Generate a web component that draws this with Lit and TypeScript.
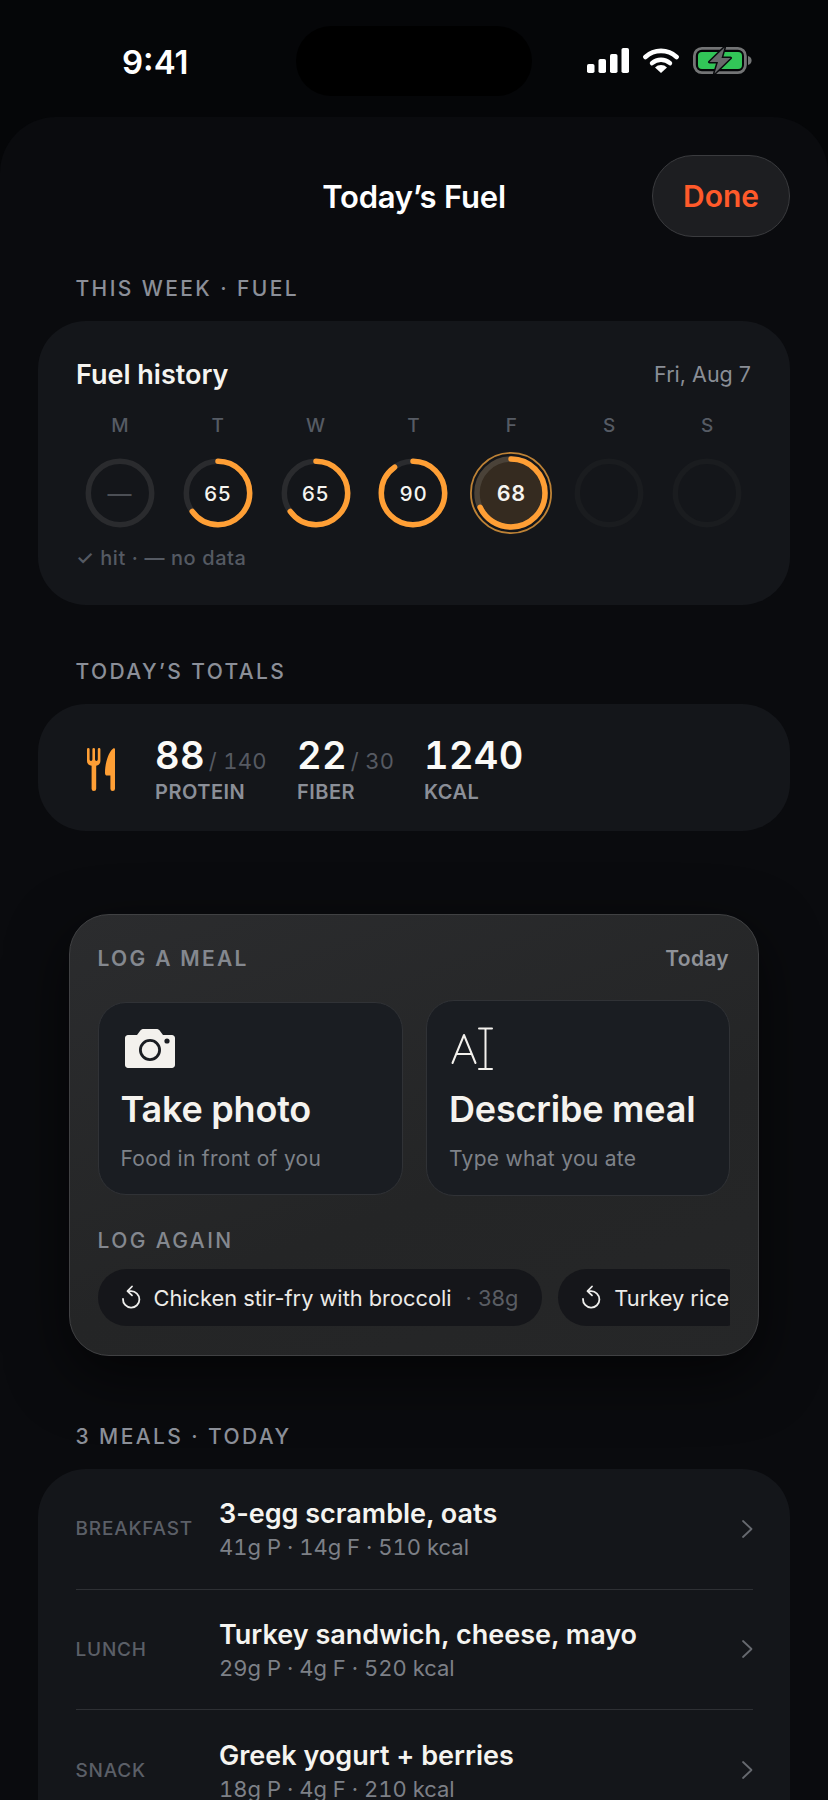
import { LitElement, html, css, svg } from "lit";
import { customElement } from "lit/decorators.js";

const RING_R = 31.7;
const CIRC = 2 * Math.PI * RING_R;

const DAYS: { l: string; v?: number; kind: "empty" | "score" | "future" | "today" }[] = [
  { l: "M", kind: "empty" },
  { l: "T", v: 65, kind: "score" },
  { l: "W", v: 65, kind: "score" },
  { l: "T", v: 90, kind: "score" },
  { l: "F", v: 68, kind: "today" },
  { l: "S", kind: "future" },
  { l: "S", kind: "future" },
];

const MEALS = [
  { tag: "BREAKFAST", name: "3-egg scramble, oats", sub: "41g P · 14g F · 510 kcal" },
  { tag: "LUNCH", name: "Turkey sandwich, cheese, mayo", sub: "29g P · 4g F · 520 kcal" },
  { tag: "SNACK", name: "Greek yogurt + berries", sub: "18g P · 4g F · 210 kcal" },
];

const replayIcon = html`<svg class="replay" viewBox="0 0 20 25" width="20" height="25" fill="none" stroke="#eeeeec" stroke-width="1.8" stroke-linecap="round" stroke-linejoin="round">
  <path d="M7 6.2 H10 A8.2 8.2 0 1 1 2 14" /><path d="M11 1.5 L6.5 6.2 L11 10.4" />
</svg>`;

@customElement("app-root")
export class AppRoot extends LitElement {
  static styles = css`
    :host { display: block; width: 828px; height: 1800px; overflow: hidden; background: #050608; font-family: Inter, "Liberation Sans", sans-serif; color: #f5f4f0; }
    .status { height: 117px; box-sizing: border-box; padding: 26px 76px 0 122px; display: flex; align-items: flex-start; justify-content: space-between; position: relative; }
    .time { font-size: 33px; line-height: 40px; font-weight: 600; margin-top: 16px; color: #fff; }
    .island { position: absolute; left: 296px; top: 26px; width: 236px; height: 70px; border-radius: 36px; background: #000; }
    .sys { display: flex; align-items: center; gap: 14px; margin-top: 20px; height: 28px; }
    .sys svg { display: block; }
    .sheet { background: #0a0b0e; border-radius: 56px 56px 0 0; height: 1683px; box-sizing: border-box; padding: 38px 38px 0 38px; }
    .nav { height: 82px; display: flex; align-items: center; justify-content: center; position: relative; }
    .nav h1 { margin: 0; font-size: 31px; font-weight: 600; color: #fff; letter-spacing: -0.2px; }
    .done { position: absolute; right: 0; top: 0; width: 138px; height: 82px; box-sizing: border-box; border-radius: 41px; background: #1d1e21; border: 1.5px solid #3a3b3e; color: #ff5a2a; font-size: 30px; font-weight: 600; display: flex; align-items: center; justify-content: center; }
    .label { font-size: 21px; line-height: 26px; font-weight: 500; letter-spacing: 2.4px; color: #8b8f98; margin-left: 37.5px; }
    .l1 { margin-top: 39px; }
    .card { background: #14161a; border-radius: 48px; width: 752px; box-sizing: border-box; }
    .week { margin-top: 19px; height: 284px; padding: 36px 34px 0 33px; }
    .wk-head { display: flex; justify-content: space-between; align-items: center; height: 34px; padding: 0 5px 0 5px; }
    .wk-title { font-size: 27px; font-weight: 600; color: #f5f4f0; }
    .wk-date { font-size: 21.5px; color: #8a8e96; }
    .days { display: grid; grid-template-columns: repeat(7, 1fr); margin-top: 23px; }
    .day { display: flex; flex-direction: column; align-items: center; }
    .day-l { font-size: 19px; line-height: 24px; font-weight: 500; color: #565b64; }
    .ring { position: relative; width: 82px; height: 82px; margin-top: 14px; }
    .ring svg { display: block; }
    .ring-n { position: absolute; inset: 0; display: flex; align-items: center; justify-content: center; font-size: 20.5px; font-weight: 500; color: #f5f4f0; letter-spacing: 0.6px; font-variant-numeric: tabular-nums; }
    .today .ring-n { font-weight: 600; font-size: 21.5px; }
    .dash { color: #4c4f55; font-size: 24px; font-weight: 400; }
    .legend { margin: 12px 0 0 5px; font-size: 20px; line-height: 24px; font-weight: 500; color: #555a63; letter-spacing: 0.6px; }
    .l2 { margin-top: 54px; }
    .totals { margin-top: 19px; height: 127px; display: flex; align-items: flex-start; padding: 28px 0 0 49px; }
    .fork { margin-top: 16px; width: 28px; flex: none; }
    .metrics { display: flex; margin-left: 40px; }
    .m { display: flex; flex-direction: column; }
    .m1 { width: 142px; }
    .m2 { width: 127px; }
    .big { font-size: 38px; line-height: 46px; font-weight: 600; color: #fbfaf7; letter-spacing: 0.3px; white-space: nowrap; font-variant-numeric: tabular-nums; }
    .of { font-size: 22px; line-height: 1; font-weight: 400; color: #565a62; letter-spacing: 0.3px; margin-left: 4px; }
    .cap { font-size: 20px; line-height: 24px; font-weight: 600; color: #8b8f98; letter-spacing: 0.5px; margin-top: 2px; }
    .log { margin: 83px 0 0 31px; width: 690px; height: 442px; box-sizing: border-box; border-radius: 40px; background: linear-gradient(160deg, #2b2c2e 0%, #242526 60%, #262728 100%); border: 1.5px solid #404143; box-shadow: 0 20px 60px rgba(0,0,0,.6); padding: 29px 28px 0 27.5px; }
    .log-head { display: flex; justify-content: space-between; align-items: center; height: 28px; }
    .log-t { font-size: 21px; font-weight: 600; letter-spacing: 2.3px; color: #84888f; }
    .log-d { font-size: 21px; font-weight: 600; color: #8f9298; letter-spacing: .3px; margin-right: 1px; }
    .acts { display: flex; justify-content: space-between; margin-top: 28px; align-items: center; }
    .act { box-sizing: border-box; background: #1a1d22; border: 1.5px solid #303236; border-radius: 28px; display: flex; flex-direction: column; }
    .a1 { width: 305px; height: 193px; padding: 25px 0 0 22px; }
    .a2 { width: 304px; height: 196px; padding: 26px 0 0 22px; }
    .act-i { height: 44px; display: block; margin-left: 4px; }
    .a2 .act-i { margin-left: 2px; }
    .act-t { font-size: 36px; line-height: 44px; font-weight: 600; color: #f5f3ef; margin-top: 15px; white-space: nowrap; letter-spacing: -0.2px; }
    .a2 .act-t { margin-top: 16px; }
    .act-s { font-size: 21px; line-height: 28px; color: #7e8289; margin-top: 14px; letter-spacing: 0.3px; }
    .again { font-size: 21px; line-height: 26px; font-weight: 500; letter-spacing: 2.4px; color: #84888f; margin-top: 32px; }
    .chips { display: flex; gap: 16px; overflow: hidden; margin-top: 15px; width: 632px; }
    .chip { flex: none; height: 57px; border-radius: 28.5px; background: #15161a; display: flex; align-items: center; padding: 0 24px 0 23px; font-size: 21.8px; color: #ecebe8; white-space: nowrap; box-sizing: border-box; }
    .replay { margin-right: 13px; display: block; flex: none; }
    .w { color: #5a5d63; margin-left: 14px; }
    .l3 { margin-top: 68px; }
    .meals { margin-top: 19px; height: 500px; padding: 0 37px 0 37.5px; }
    .row { height: 120.5px; box-sizing: border-box; border-bottom: 1.5px solid #2e3034; display: flex; align-items: center; }
    .row:last-child { border-bottom: 0; }
    .tag { width: 143.5px; flex: none; font-size: 19px; font-weight: 500; letter-spacing: 0.8px; color: #5b5f67; }
    .mid { flex: 1; display: flex; flex-direction: column; padding-top: 2px; }
    .name { font-size: 27px; line-height: 32px; font-weight: 600; color: #f5f4f0; }
    .sub { font-size: 22px; line-height: 28px; color: #7d8087; margin-top: 3px; font-variant-numeric: tabular-nums; }
  `;

  ring(d: (typeof DAYS)[number]) {
    const c = 41;
    const isToday = d.kind === "today";
    const r = isToday ? 34 : RING_R;
    const circ = isToday ? 2 * Math.PI * r : CIRC;
    const track = d.kind === "future" ? "#1a1c1f" : isToday ? "#4a4238" : "#2a2b2e";
    const pct = (d.v ?? 0) / 100;
    return html`<svg width="82" height="82" viewBox="0 0 82 82" fill="none">
      ${isToday ? svg`<circle cx="41" cy="41" r="40.1" stroke="#bd8236" stroke-width="1.8"/><circle cx="41" cy="41" r="33" fill="#352b20"/>` : ""}
      <circle cx=${c} cy=${c} r=${r} stroke=${track} stroke-width="5.5"/>
      ${d.v !== undefined
        ? svg`<circle cx=${c} cy=${c} r=${r} stroke="#ff9f35" stroke-width="5.5" stroke-linecap="round" stroke-dasharray=${`${pct * circ} ${circ}`} transform="rotate(-90 41 41)"/>`
        : ""}
    </svg>`;
  }

  render() {
    return html`
      <div class="status">
        <div class="time">9:41</div>
        <div class="island"></div>
        <div class="sys">
          <svg width="42" height="25" viewBox="0 0 42 25" fill="#fff"><rect x="0" y="16" width="7.5" height="9" rx="1.8"/><rect x="11.5" y="11" width="7.5" height="14" rx="1.8"/><rect x="23" y="6" width="7.5" height="19" rx="1.8"/><rect x="34.5" y="0" width="7.5" height="25" rx="1.8"/></svg>
          <svg width="36" height="25" viewBox="0 0 36 25" fill="none" stroke="#fff" stroke-linecap="round"><path d="M2.4 9 A23 23 0 0 1 33.6 9" stroke-width="4.6"/><path d="M9 15.2 A13.5 13.5 0 0 1 27 15.2" stroke-width="4.4"/><path d="M18 25 L12 19.4 A8.6 8.6 0 0 1 24 19.4 Z" fill="#fff" stroke="none"/></svg>
          <svg width="59" height="27" viewBox="0 0 59 27" fill="none"><rect x="1.4" y="1.4" width="51" height="24.2" rx="7.5" stroke="#737475" stroke-width="2.8"/><rect x="5" y="5" width="44" height="17" rx="4" fill="#32c558"/><path d="M55 9 C57.6 9.8 58.6 11.6 58.6 13.5 C58.6 15.4 57.6 17.2 55 18 Z" fill="#737475"/><path d="M31.5 0.5 L16.5 15 H25 L21.5 26.5 L37.5 11 H28.5 Z" fill="#68696b" stroke="#0a0b0e" stroke-width="3" stroke-linejoin="round" paint-order="stroke"/></svg>
        </div>
      </div>
      <div class="sheet">
        <div class="nav"><h1>Today’s Fuel</h1><div class="done">Done</div></div>
        <div class="label l1">THIS WEEK · FUEL</div>
        <div class="card week">
          <div class="wk-head"><span class="wk-title">Fuel history</span><span class="wk-date">Fri, Aug 7</span></div>
          <div class="days">
            ${DAYS.map(
              (d) => html`<div class="day ${d.kind}">
                <div class="day-l">${d.l}</div>
                <div class="ring">${this.ring(d)}
                  ${d.v !== undefined ? html`<div class="ring-n">${d.v}</div>` : d.kind === "empty" ? html`<div class="ring-n dash">—</div>` : ""}
                </div>
              </div>`
            )}
          </div>
          <div class="legend">✓ hit · — no data</div>
        </div>
        <div class="label l2">TODAY’S TOTALS</div>
        <div class="card totals">
          <svg class="fork" width="28" height="43" viewBox="0 0 28 43" fill="#ff9f35">
            <path d="M0 1.3 a1.3 1.3 0 0 1 2.6 0 V11.5 a1.4 1.4 0 0 0 2.8 0 V1.3 a1.3 1.3 0 0 1 2.6 0 V11.5 a1.4 1.4 0 0 0 2.8 0 V1.3 a1.3 1.3 0 0 1 2.6 0 V13 c0 2.6 -1.6 4 -4.2 4.8 V40.7 a2.3 2.3 0 0 1 -4.6 0 V17.8 C1.6 17 0 15.6 0 13 Z"/>
            <path d="M28 1.3 V40.7 a2.3 2.3 0 0 1 -4.6 0 V27.5 H20.2 c-1.4 0 -2.2 -1 -2.2 -2.6 C18 14 22 3.4 26.2 .4 c.9 -.6 1.8 -.1 1.8 .9 Z"/>
          </svg>
          <div class="metrics">
            <div class="m m1"><div class="big">88<span class="of">/ 140</span></div><div class="cap">PROTEIN</div></div>
            <div class="m m2"><div class="big">22<span class="of">/ 30</span></div><div class="cap">FIBER</div></div>
            <div class="m"><div class="big">1240</div><div class="cap">KCAL</div></div>
          </div>
        </div>
        <div class="log">
          <div class="log-head"><span class="log-t">LOG A MEAL</span><span class="log-d">Today</span></div>
          <div class="acts">
            <div class="act a1">
              <svg class="act-i" width="50" height="44" viewBox="0 0 50 44" fill="none">
                <path fill-rule="evenodd" fill="#f3f1ed" d="M3 7 H12 L15 3 C16 1.6 17 1 19 1 H31 C33 1 34 1.6 35 3 L38 7 H47 C48.6 7 50 8.4 50 10 V37 C50 38.6 48.6 40 47 40 H3 C1.4 40 0 38.6 0 37 V10 C0 8.4 1.4 7 3 7 Z M25 11 A11 11 0 1 0 25 33 A11 11 0 1 0 25 11 Z M25 13.8 A8.2 8.2 0 1 1 25 30.2 A8.2 8.2 0 1 1 25 13.8 Z M42 10.4 A2.6 2.6 0 1 0 42 15.6 A2.6 2.6 0 1 0 42 10.4 Z"/>
              </svg>
              <div class="act-t">Take photo</div>
              <div class="act-s">Food in front of you</div>
            </div>
            <div class="act a2">
              <svg class="act-i" width="42" height="44" viewBox="0 0 42 44" fill="none" stroke="#f3f1ed" stroke-width="2" stroke-linecap="round" stroke-linejoin="round">
                <path d="M1.5 36 L13 8 L24.5 36 M5.5 27 H20.5"/>
                <path d="M28 1.5 H41 M34.5 1.5 V42 M28 42 H41"/>
              </svg>
              <div class="act-t">Describe meal</div>
              <div class="act-s">Type what you ate</div>
            </div>
          </div>
          <div class="again">LOG AGAIN</div>
          <div class="chips">
            <div class="chip">${replayIcon}Chicken stir-fry with broccoli<span class="w">· 38g</span></div>
            <div class="chip">${replayIcon}Turkey rice</div>
          </div>
        </div>
        <div class="label l3">3 MEALS · TODAY</div>
        <div class="card meals">
          ${MEALS.map(
            (m) => html`<div class="row">
              <div class="tag">${m.tag}</div>
              <div class="mid"><div class="name">${m.name}</div><div class="sub">${m.sub}</div></div>
              <svg width="12" height="20" viewBox="0 0 12 20" fill="none" stroke="#66696f" stroke-width="1.8" stroke-linecap="round" stroke-linejoin="round"><path d="M2 2 L10.5 10 L2 18"/></svg>
            </div>`
          )}
        </div>
      </div>
    `;
  }
}
